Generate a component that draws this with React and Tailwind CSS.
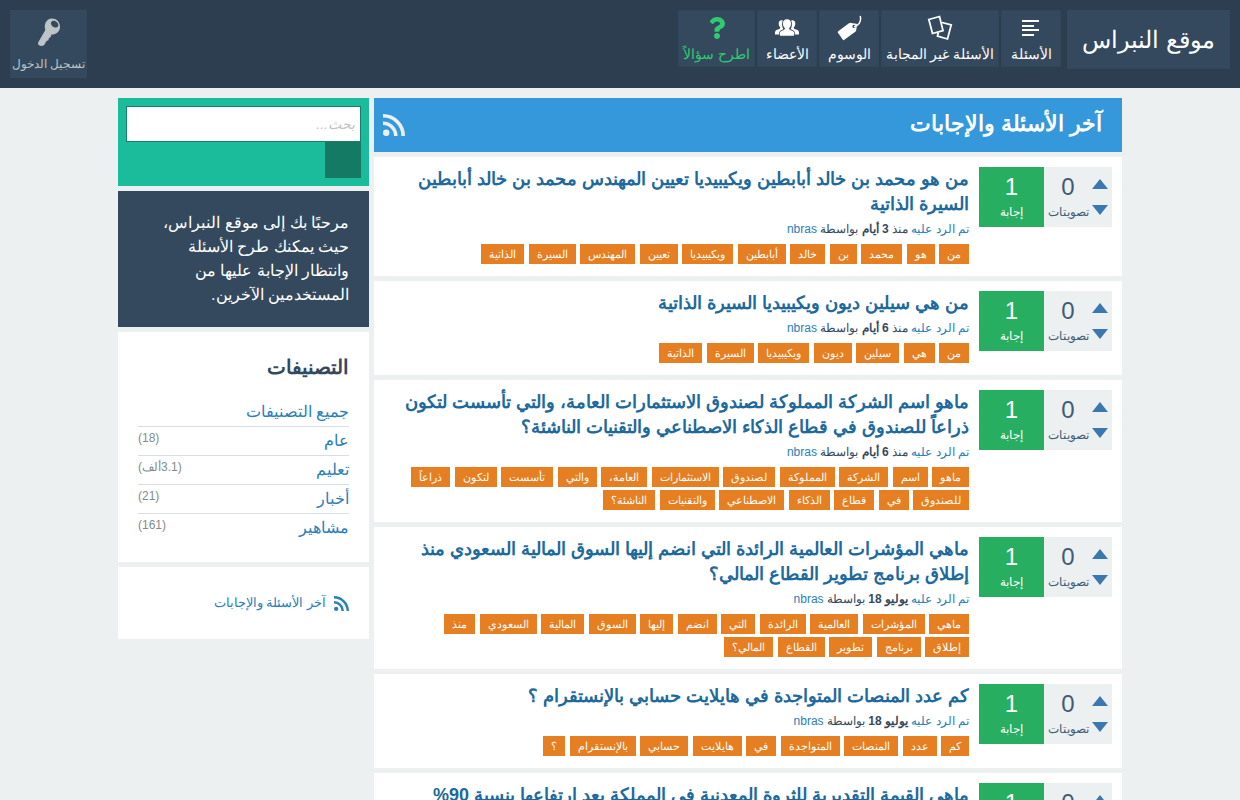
import { FaQuestion } from "react-icons/fa";

const questions = [
  {
    title: "من هو محمد بن خالد أبابطين ويكيبيديا تعيين المهندس محمد بن خالد أبابطين السيرة الذاتية",
    when: "3 أيام",
    ago: true,
    tags: ["من", "هو", "محمد", "بن", "خالد", "أبابطين", "ويكيبيديا", "تعيين", "المهندس", "السيرة", "الذاتية"],
  },
  {
    title: "من هي سيلين ديون ويكيبيديا السيرة الذاتية",
    when: "6 أيام",
    ago: true,
    tags: ["من", "هي", "سيلين", "ديون", "ويكيبيديا", "السيرة", "الذاتية"],
  },
  {
    title:
      "ماهو اسم الشركة المملوكة لصندوق الاستثمارات العامة، والتي تأسست لتكون ذراعاً للصندوق في قطاع الذكاء الاصطناعي والتقنيات الناشئة؟",
    when: "6 أيام",
    ago: true,
    tags: [
      "ماهو", "اسم", "الشركة", "المملوكة", "لصندوق", "الاستثمارات", "العامة،", "والتي", "تأسست", "لتكون", "ذراعاً",
      "للصندوق", "في", "قطاع", "الذكاء", "الاصطناعي", "والتقنيات", "الناشئة؟",
    ],
  },
  {
    title:
      "ماهي المؤشرات العالمية الرائدة التي انضم إليها السوق المالية السعودي منذ إطلاق برنامج تطوير القطاع المالي؟",
    when: "يوليو 18",
    ago: false,
    tags: [
      "ماهي", "المؤشرات", "العالمية", "الرائدة", "التي", "انضم", "إليها", "السوق", "المالية", "السعودي", "منذ",
      "إطلاق", "برنامج", "تطوير", "القطاع", "المالي؟",
    ],
  },
  {
    title: "كم عدد المنصات المتواجدة في هايلايت حسابي بالإنستقرام ؟",
    when: "يوليو 18",
    ago: false,
    tags: ["كم", "عدد", "المنصات", "المتواجدة", "في", "هايلايت", "حسابي", "بالإنستقرام", "؟"],
  },
  {
    title: "ماهي القيمة التقديرية للثروة المعدنية في المملكة بعد ارتفاعها بنسبة 90%",
    when: "يوليو 18",
    ago: false,
    tags: ["ماهي", "القيمة", "التقديرية", "للثروة", "المعدنية", "في", "المملكة"],
  },
];

const categories = [
  { name: "جميع التصنيفات" },
  { name: "عام", count: "(18)" },
  { name: "تعليم", count: "(3.1ألف)" },
  { name: "أخبار", count: "(21)" },
  { name: "مشاهير", count: "(161)" },
];

function LinesIcon() {
  return (
    <svg width="18" height="24" viewBox="0 0 18 24" fill="none" stroke="currentColor" strokeWidth="2">
      <path d="M0 5h17M0 10h12M0 14h17M0 19h12" />
    </svg>
  );
}

function CardsIcon() {
  return (
    <svg width="26" height="26" viewBox="0 0 26 26" fill="none" stroke="currentColor" strokeWidth="1.8">
      <path d="M1.8 4.5 12.5 1.5 16 15.5 5.5 18.5Z" />
      <path d="M15 7.5 24.2 10 20.5 24 10.5 21.2 11.2 17.5" />
    </svg>
  );
}

function TagIcon() {
  return (
    <svg width="26" height="26" viewBox="0 0 26 26" fill="currentColor">
      <path
        fillRule="evenodd"
        d="M2.2 16.2 13 8.2Q14 7.7 15 7.9L20.3 8.8Q21 9 21 9.7L20.2 15.2Q20 16.2 19.3 16.8L8 25Q7.2 25.4 6.7 24.6L1.8 17.4Q1.5 16.7 2.2 16.2ZM18 9.7a1.7 1.7 0 1 0 .1 3.4 1.7 1.7 0 0 0-.1-3.4Z"
      />
      <path d="M18 11.8C22 11 25.8 7 24.2 1" fill="none" stroke="currentColor" strokeWidth="1.5" />
    </svg>
  );
}

function UsersIcon() {
  return (
    <svg width="24" height="18" viewBox="0 0 24 18" fill="currentColor">
      <path d="M7.8 1.5C5.4.6 3.5 2.2 3.7 4.8c.1 1.5.5 2.6 1.4 3.4.2.8 0 1.3-.8 1.7L1.5 11C.4 11.6 0 12.5 0 13.8V15.5h4c.1-2.6.7-3.6 2.5-4.4l1.9-.9C6.9 7.7 6.6 4.1 7.8 1.5Z" />
      <path d="M16.2 1.5c2.4-.9 4.3.7 4.1 3.3-.1 1.5-.5 2.6-1.4 3.4-.2.8 0 1.3.8 1.7l2.8 1.1c1.1.6 1.5 1.5 1.5 2.8v1.7h-4c-.1-2.6-.7-3.6-2.5-4.4l-1.9-.9c1.5-2.5 1.8-6.1.6-8.7Z" />
      <path d="M12 .3c2.7 0 4.2 1.7 4 4.4-.1 2-.7 3.3-1.8 4.3-.2 1 .1 1.5 1 1.9l2.4 1.1c1.2.6 1.6 1.4 1.6 2.8v.9c0 .8-.4 1.1-1.2 1.1H6c-.8 0-1.2-.3-1.2-1.1v-.9c0-1.4.4-2.2 1.6-2.8l2.4-1.1c.9-.4 1.2-.9 1-1.9C8.7 8 8.1 6.7 8 4.7 7.8 2 9.3.3 12 .3Z" />
    </svg>
  );
}

function KeyIcon() {
  return (
    <svg width="24" height="28" viewBox="0 0 24 28" fill="currentColor">
      <path
        fillRule="evenodd"
        d="M14.500.5C19.2.3 23 3.8 23 8.700c0 5-4 8-8.500 7.800l-1 2.700-1.500.7-.6 2.400-1.900.8-2.500 4.100Q4.500 28.500 2.500 27.500.4 26.300 1.300 24.200L8.300 12C6.500 6.500 9.500.9 14.500.5ZM14.300 4c-1.100 1.800.3 4.200 2.600 5.200 1.600.7 3.300.5 4.100-.6 1-1.800-.2-4.200-2.500-5.300C16.800 2.500 15.100 2.800 14.300 4Z"
      />
    </svg>
  );
}

function RssIcon({ size }) {
  return (
    <svg width={size} height={size} viewBox="0 0 22 22" fill="none" stroke="currentColor" strokeWidth="3.6">
      <circle cx="3.2" cy="18.8" r="3.2" fill="currentColor" stroke="none" />
      <path d="M0 9.2A12.8 12.8 0 0 1 12.8 22M0 1.8A20.2 20.2 0 0 1 20.2 22" />
    </svg>
  );
}

function NavItem({ icon, label, className }) {
  return (
    <a
      href="#"
      className={`flex h-[57px] flex-col items-center border border-[#30465b] bg-[#34495e] text-sm leading-5 hover:bg-[#2c3e50] ${className}`}
    >
      <span className="flex h-[33px] items-center justify-center">{icon}</span>
      <span className="whitespace-nowrap">{label}</span>
    </a>
  );
}

function Header() {
  return (
    <header className="flex h-[88px] items-start bg-[#2c3e50] p-[10px]">
      <a
        href="#"
        className="flex h-[59px] w-[163px] items-center justify-center bg-[#34495e] text-2xl whitespace-nowrap text-white"
      >
        موقع النبراس
      </a>
      <nav className="ms-[6px] flex gap-[2px]">
        <NavItem icon={<LinesIcon />} label="الأسئلة" className="w-[60px] text-white" />
        <NavItem icon={<CardsIcon />} label="الأسئلة غير المجابة" className="w-[118px] text-white" />
        <NavItem icon={<TagIcon />} label="الوسوم" className="w-[60px] text-white" />
        <NavItem icon={<UsersIcon />} label="الأعضاء" className="w-[60px] text-white" />
        <NavItem icon={<FaQuestion size={22} />} label="اطرح سؤالاً" className="w-[77px] text-[#2ecc71]" />
      </nav>
      <button
        type="button"
        className="ms-auto flex h-[68px] w-[77px] flex-col items-center bg-[#34495e] pt-2 text-xs text-[#bdc3c7]"
      >
        <KeyIcon />
        <span className="mt-[10px] whitespace-nowrap">تسجيل الدخول</span>
      </button>
    </header>
  );
}

function Votes() {
  return (
    <div className="flex h-[60px] shrink-0 text-[#415b76]">
      <div className="flex w-[68px] bg-[#ecf0f1]">
        <div className="flex w-6 shrink-0 flex-col items-center gap-4 pt-3">
          <button
            type="button"
            aria-label="تصويت إيجابي"
            className="border-x-8 border-b-10 border-x-transparent border-b-[#3c78b0]"
          />
          <button
            type="button"
            aria-label="تصويت سلبي"
            className="border-x-8 border-t-10 border-x-transparent border-t-[#3c78b0]"
          />
        </div>
        <div className="flex w-10 flex-col items-center">
          <span className="h-9 pt-1 text-2xl leading-8">0</span>
          <span className="text-xs leading-[18px] whitespace-nowrap">تصويتات</span>
        </div>
      </div>
      <div className="flex w-[65px] flex-col items-center bg-[#27ae60] text-white">
        <span className="h-9 pt-1 text-2xl leading-8">1</span>
        <span className="text-xs leading-[18px]">إجابة</span>
      </div>
    </div>
  );
}

function Question({ title, when, ago, tags }) {
  return (
    <article className="flex gap-[10px] bg-white px-[10px] pt-[10px] pb-[9px]">
      <Votes />
      <div className="min-w-0 flex-1 pe-4">
        <h2 className="text-lg leading-[25px] font-bold">
          <a href="#" className="text-[#20699c] hover:underline">
            {title}
          </a>
        </h2>
        <p className="pt-[2px] text-xs leading-5">
          <a href="#" className="text-[#2980b9]">تم الرد عليه</a> {ago && "منذ "}
          <strong>{when}</strong> بواسطة{" "}
          <a href="#" className="text-[#2980b9]">nbras</a>
        </p>
        <ul className="mt-[5px] text-base leading-[23px]">
          {tags.flatMap((tag) => [
            <li key={tag} className="inline-block align-top">
              <a href="#" className="block h-5 bg-[#e67e22] px-2 text-[11px] leading-5 text-white">
                {tag}
              </a>
            </li>,
            " ",
          ])}
        </ul>
      </div>
    </article>
  );
}

function Sidebar() {
  return (
    <aside className="flex w-[251px] shrink-0 flex-col gap-[5px]">
      <form className="bg-[#1abc9c] p-2" onSubmit={(e) => e.preventDefault()}>
        <input
          type="text"
          aria-label="بحث"
          placeholder="بحث..."
          className="block h-9 w-full border border-[#16806a] bg-white px-[5px] text-sm placeholder:text-[#bdc3c7] placeholder:italic"
        />
        <button type="submit" aria-label="بحث" className="block size-9 bg-[#147a64]" />
      </form>

      <div className="bg-[#34495e] p-5 text-base leading-6 text-white">
        مرحبًا بك إلى موقع النبراس، حيث يمكنك طرح الأسئلة وانتظار الإجابة عليها من المستخدمين الآخرين.
      </div>

      <div className="bg-white p-5">
        <h2 className="mb-4 text-xl leading-[30px] font-bold">التصنيفات</h2>
        <ul className="divide-y divide-[#d9dee0]">
          {categories.map(({ name, count }) => (
            <li key={name} className="flex justify-between">
              <a href="#" className="text-base leading-7 text-[#2980b9]">
                {name}
              </a>
              {count && <span className="pt-[2px] text-xs leading-[18px] text-[#7f8c8d]">{count}</span>}
            </li>
          ))}
        </ul>
      </div>

      <a href="#" className="flex h-[72px] items-center gap-2 bg-white px-5 text-[13px] text-[#2980b9]">
        <RssIcon size={15} />
        آخر الأسئلة والإجابات
      </a>
    </aside>
  );
}

export default function App() {
  return (
    <div dir="rtl" className="min-h-screen bg-[#ecf0f1] font-['Liberation_Sans',sans-serif] text-[#34495e]">
      <Header />
      <div className="mx-auto flex max-w-[1004px] items-start gap-[5px] pt-[10px]">
        <main className="flex min-w-0 flex-1 flex-col gap-[5px]">
          <div className="flex h-[54px] items-center justify-between bg-[#3498db] ps-5 pe-[9px] text-[#ecf0f1]">
            <h1 className="pb-[2px] text-[22px] leading-8 font-bold text-white">آخر الأسئلة والإجابات</h1>
            <a href="#" aria-label="RSS">
              <RssIcon size={22} />
            </a>
          </div>
          {questions.map((q) => (
            <Question key={q.title} {...q} />
          ))}
        </main>
        <Sidebar />
      </div>
    </div>
  );
}
